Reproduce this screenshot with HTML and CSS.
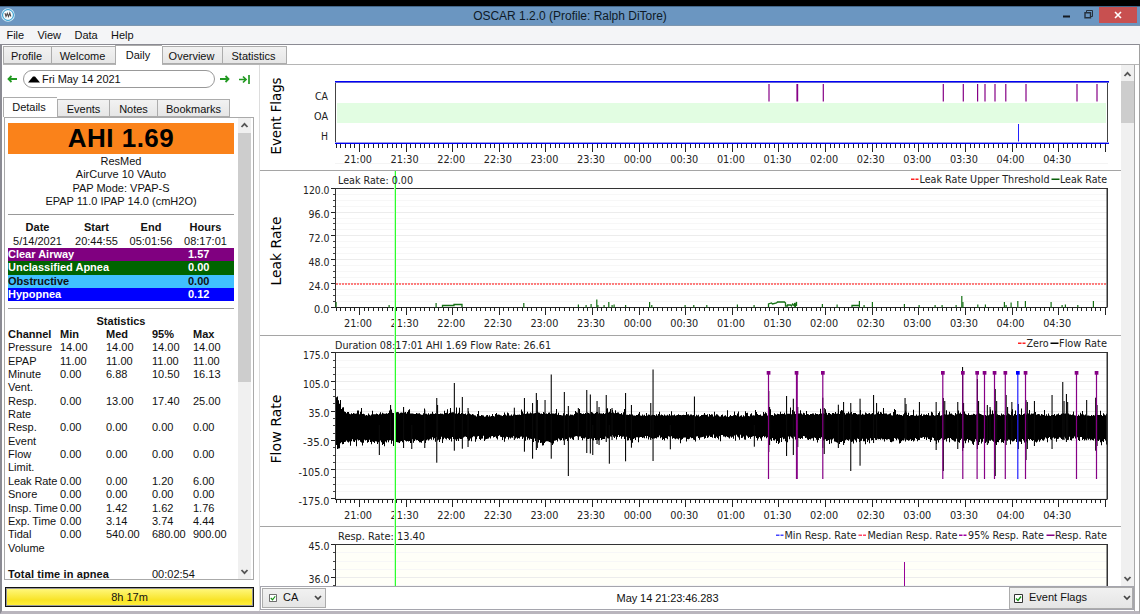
FILE: index.html
```html
<!DOCTYPE html>
<html lang="en">
<head>
<meta charset="utf-8">
<title>OSCAR 1.2.0</title>
<link rel="stylesheet" href="styles.css">
</head>
<body>
<header class="titlebar">
  <svg class="logo" width="14" height="14" viewBox="0 0 14 14"><circle cx="7" cy="7" r="6" fill="#f4fafc" stroke="#d5edf8" stroke-width="1.6"/><circle cx="7" cy="7" r="5.4" fill="none" stroke="#2499cf" stroke-width="1"/><path d="M4 5.200l1 3.300L6.300 5.500l1.200 3L8.800 5l1 3.500" fill="none" stroke="#514a4a" stroke-width="1.100"/></svg>
  <h1 class="title">OSCAR 1.2.0 (Profile: Ralph DiTore)</h1>
  <div class="winbtns">
    <svg width="32" height="16" viewBox="0 0 32 16"><path d="M1 9.500h7" stroke="#151b22" stroke-width="2"/><path d="M24.500 5v-1.500h6v6H29" fill="none" stroke="#26313d"/><path d="M23 5.700h5.500v5H23z" fill="none" stroke="#26313d" stroke-width="1.400"/></svg>
    <span class="close"><svg width="8" height="8" viewBox="0 0 8 8"><path d="M1 1l6 6M7 1L1 7" stroke="#fff" stroke-width="1.600"/></svg></span>
  </div>
</header>
<nav class="menu"><span>File</span><span>View</span><span>Data</span><span>Help</span></nav>
<div class="client">
  <div class="tabs main-tabs"><span class="t-profile">Profile</span><span class="t-welcome">Welcome</span><span class="t-daily on">Daily</span><span class="t-over">Overview</span><span class="t-stats">Statistics</span></div>
  <div class="panes">
    <aside class="side">
      <div class="datebar">
        <svg width="10" height="8" viewBox="0 0 10 8"><path d="M10 4H2M4.500 1l-3 3 3 3" fill="none" stroke="#229922" stroke-width="1.800"/></svg>
        <div class="date"><svg width="12" height="7" viewBox="0 0 12 7"><path d="M0 6.500L5 .5h2l5 6z"/></svg><span>Fri May 14 2021</span></div>
        <svg width="10" height="8" viewBox="0 0 10 8"><path d="M0 4h8M5.500 1l3 3-3 3" fill="none" stroke="#229922" stroke-width="1.800"/></svg>
        <svg class="last" width="11" height="9" viewBox="0 0 11 9"><path d="M0 4.500h7M4 1.500l3 3-3 3M10 0v9" fill="none" stroke="#229922" stroke-width="1.700"/></svg>
      </div>
      <div class="tabs side-tabs"><span class="t-details on">Details</span><span class="t-events">Events</span><span class="t-notes">Notes</span><span class="t-book">Bookmarks</span></div>
      <div class="details">
        <div class="report">
          <div class="ahi">AHI 1.69</div>
          <div class="machine">ResMed<br>AirCurve 10 VAuto<br>PAP Mode: VPAP-S<br>EPAP 11.0 IPAP 14.0 (cmH2O)</div>
          <hr class="rule">
          <div class="session"><b>Date</b><b>Start</b><b>End</b><b>Hours</b><span>5/14/2021</span><span>20:44:55</span><span>05:01:56</span><span>08:17:01</span></div>
          <div class="ev ca"><span>Clear Airway</span><span>1.57</span></div>
          <div class="ev ua"><span>Unclassified Apnea</span><span>0.00</span></div>
          <div class="ev oa"><span>Obstructive</span><span>0.00</span></div>
          <div class="ev hy"><span>Hypopnea</span><span>0.12</span></div>
          <hr class="rule second">
          <div class="stat-title">Statistics</div>
          <div class="stats">
            <b>Channel</b><b>Min</b><b>Med</b><b>95%</b><b>Max</b>
            <span>Pressure</span><span>14.00</span><span>14.00</span><span>14.00</span><span>14.00</span>
            <span>EPAP</span><span>11.00</span><span>11.00</span><span>11.00</span><span>11.00</span>
            <span>Minute<br>Vent.</span><span>0.00</span><span>6.88</span><span>10.50</span><span>16.13</span>
            <span>Resp.<br>Rate</span><span>0.00</span><span>13.00</span><span>17.40</span><span>25.00</span>
            <span>Resp.<br>Event</span><span>0.00</span><span>0.00</span><span>0.00</span><span>0.00</span>
            <span>Flow<br>Limit.</span><span>0.00</span><span>0.00</span><span>0.00</span><span>0.00</span>
            <span class="tight">Leak Rate</span><span>0.00</span><span>0.00</span><span>1.20</span><span>6.00</span>
            <span>Snore</span><span>0.00</span><span>0.00</span><span>0.00</span><span>0.00</span>
            <span class="tight">Insp. Time</span><span>0.00</span><span>1.42</span><span>1.62</span><span>1.76</span>
            <span class="tight">Exp. Time</span><span>0.00</span><span>3.14</span><span>3.74</span><span>4.44</span>
            <span>Tidal<br>Volume</span><span>0.00</span><span>540.00</span><span>680.00</span><span>900.00</span>
          </div>
          <div class="total"><b>Total time in apnea</b><span>00:02:54</span></div>
        </div>
        <div class="scroll side-scroll">
          <svg width="13" height="14" viewBox="0 0 13 14"><path d="M3.500 9l3-3.200L9.500 9" fill="none" stroke="#555" stroke-width="1.800"/></svg>
          <div class="thumb"></div>
          <svg class="down" width="13" height="14" viewBox="0 0 13 14"><path d="M3.500 5l3 3.200L9.500 5" fill="none" stroke="#555" stroke-width="1.800"/></svg>
        </div>
      </div>
      <div class="duration"><span>8h 17m</span></div>
    </aside>
    <main class="graphs">
      <div class="graph-row">
        <div class="graph-list">
          <svg id="flags" width="861" height="105" viewBox="260 65 861 105"></svg>
          <svg id="leak" width="861" height="165" viewBox="260 170 861 165"></svg>
          <svg id="flow" width="861" height="191" viewBox="260 335 861 191"></svg>
          <svg id="resp" width="861" height="60" viewBox="260 526 861 60"></svg>
        </div>
        <div class="scroll graph-scroll">
          <svg width="13" height="14" viewBox="0 0 13 14"><path d="M3.500 9l3-3.200L9.500 9" fill="none" stroke="#555" stroke-width="1.800"/></svg>
          <div class="thumb"></div>
          <svg class="down" width="13" height="14" viewBox="0 0 13 14"><path d="M3.500 5l3 3.200L9.500 5" fill="none" stroke="#555" stroke-width="1.800"/></svg>
        </div>
      </div>
      <div class="footer">
        <div class="combo combo-ca"><svg class="check" width="8" height="8" viewBox="0 0 9 9"><path d="M.5.5h8v8h-8z" fill="#fff" stroke="#555"/><path d="M2 4.500l2 2 3-4" fill="none" stroke="#159015" stroke-width="1.300"/></svg><span>CA</span><svg class="chev" width="8" height="6" viewBox="0 0 8 6"><path d="M1 1l3 3 3-3" fill="none" stroke="#444" stroke-width="1.700"/></svg></div>
        <div class="stamp">May 14 21:23:46.283</div>
        <div class="combo combo-flags"><svg class="check" width="9" height="9" viewBox="0 0 9 9"><path d="M.5.5h8v8h-8z" fill="#fff" stroke="#333"/><path d="M2 4.500l2 2 3-4" fill="none" stroke="#159015" stroke-width="1.300"/></svg><span>Event Flags</span><svg class="chev" width="8" height="6" viewBox="0 0 8 6"><path d="M1 1l3 3 3-3" fill="none" stroke="#444" stroke-width="1.700"/></svg></div>
      </div>
    </main>
  </div>
</div>
<script src="graphs.js"></script>
</body>
</html>
```
FILE: styles.css
```css
* { box-sizing: border-box; }
body { margin: 0; width: 1140px; height: 614px; overflow: hidden; display: flex; flex-direction: column; background: #fff; border-top: 6px solid #000; font: 11px/13.35px "Liberation Sans", Arial, sans-serif; color: #111; }
svg { display: block; flex: none; }
.titlebar { height: 20px; background: #6b96c1; border-top: 1px solid #44678a; border-bottom: 1px solid #7d97b0; display: flex; align-items: center; justify-content: space-between; }
.logo { margin: 0 0 2px 1px; }
.title { margin: 0 0 0 63px; flex: 1; text-align: center; font-weight: normal; font-size: 12px; line-height: 18px; color: #0e1a26; letter-spacing: -.01px; }
.winbtns { display: flex; align-self: flex-start; width: 76px; height: 16px; margin-right: 2px; }
.winbtns > svg { margin-right: 5px; }
.close { width: 38px; height: 16px; background: #c85050; display: flex; align-items: center; justify-content: center; }
.menu { height: 18px; background: #f4f5f7; display: flex; gap: 13.500px; padding: 3px 0 0 6.500px; font-size: 11px; letter-spacing: -.05px; color: #111; }
.client { height: 570px; border: solid #8b8b93; border-width: 1px 1px 3px 2px; border-bottom-color: #b9b5bd; border-right-color: #a0a0a0; padding-left: 1px; display: flex; flex-direction: column; }
.tabs { display: flex; align-items: flex-end; }
.tabs span { border: 1px solid #acacac; border-right-width: 0; background: linear-gradient(#f2f2f2, #e6e6e6); text-align: center; height: 18px; line-height: 18px; white-space: nowrap; }
.tabs span:last-child { border-right-width: 1px; }
.tabs .on { background: #fff; border-bottom: 0; }
.main-tabs { height: 20px; border-bottom: 1px solid #b5b5b5; }
.main-tabs span { height: 18px; padding-right: 2px; }
.main-tabs .on { height: 20px; margin-bottom: -1px; }
.t-profile { width: 48px; } .t-welcome { width: 64px; } .t-daily { width: 47px; } .t-over { width: 60px; } .t-stats { width: 65px; }
.panes { flex: 1; display: flex; min-height: 0; }
.side { width: 251px; margin-right: 6px; display: flex; flex-direction: column; }
.datebar { display: flex; align-items: center; height: 18px; margin-top: 5px; padding-left: 4px; }
.date { width: 192px; height: 18px; border: 1px solid #999; border-radius: 9px; margin: 0 5px 0 6px; padding: 1px 0 0 4px; display: flex; align-items: center; gap: 2px; }
.date span { letter-spacing: -.06px; }
.last { margin-left: 9px; }
.side-tabs { margin-top: 9px; height: 20px; }
.side-tabs .on { height: 20px; padding-right: 3px; line-height: 19px; }
.t-details { width: 54px; } .t-events { width: 52px; } .t-notes { width: 48px; } .t-book { width: 73px; }
.details { height: 463px; margin-left: 1px; border: 1px solid #aaa; display: flex; overflow: hidden; }
.report { width: 226px; margin: 5px 4px 0 3px; flex: none; height: 456px; }
.ahi { height: 31px; background: #fa821a; font: bold 26px/31px "Liberation Sans", Arial, sans-serif; letter-spacing: .5px; color: #000; text-align: center; }
.machine { text-align: center; padding-top: 1px; height: 60px; }
.rule { border: 0; height: 1px; background: #999; margin: 0; }
.session { display: grid; grid-template-columns: 59px 59px 50px 59px; padding-top: 6px; height: 33px; text-align: center; line-height: 13.300px; white-space: nowrap; color: #111; }
.ev { display: grid; grid-template-columns: 180px 1fr; height: 13.300px; font-weight: bold; color: #fff; }
.ca { background: #800080; } .ua { background: #006400; } .oa { background: #40c0ff; color: #111; } .hy { background: #00f; }
.second { margin-top: 6.500px; }
.stat-title { text-align: center; font-weight: bold; margin-top: 6px; height: 13.350px; }
.stats { display: grid; grid-template-columns: 52px 46px 46px 41px 41px; white-space: nowrap; }
.stats .tight { letter-spacing: -.1px; }
.total { display: grid; grid-template-columns: 144px 1fr; margin-top: 13px; white-space: nowrap; }
.total b { letter-spacing: .12px; }
.scroll { background: #f0f0f0; display: flex; flex-direction: column; width: 13px; }
.side-scroll .thumb { height: 249px; margin-top: 1px; background: #cdcdcd; }
.down { margin-top: auto; }
.duration { height: 20px; margin: 7px 0 0 2px; border: 2px solid #111; outline: 1px solid #999; outline-offset: -2px; background: linear-gradient(#fff77a, #f8e326 70%, #ffee3a); display: flex; justify-content: center; line-height: 16px; }
.graphs { width: 876px; border-left: 1px solid #ddd; border-right: 1px solid #aaa; display: flex; flex-direction: column; margin-left: -1px; }
.graph-row { display: flex; height: 521px; overflow: hidden; }
.graph-list { width: 861px; }
.graph-list text { font-family: "DejaVu Sans", sans-serif; font-size: 10px; fill: #222; }
.graph-list .name { font-size: 13.500px; fill: #000; }
.graph-scroll { width: 13px; padding-top: 2px; }
.graph-scroll .thumb { height: 42px; background: #cdcdcd; }
.footer { height: 24px; border: 1px solid #a5a5ad; display: flex; align-items: center; justify-content: space-between; }
.combo { height: 20px; border: 1px solid #acacac; background: linear-gradient(#f1f1f1, #e5e5e5); display: flex; align-items: center; }
.combo-ca { width: 64px; padding: 0 3px 0 6px; margin-left: 1px; }
.combo-flags { width: 124px; height: 22px; padding: 0 1px 0 4px; }
.combo span { margin-left: 6px; flex: 1; }
.stamp { flex: 1; text-align: center; padding: 1px 0 0; letter-spacing: -.08px; }
```
FILE: graphs.js
```js
const NS = 'http://www.w3.org/2000/svg';
const LEFT = 335, RIGHT = 1107.5;

function add(svg, tag, attrs, text) {
  const el = document.createElementNS(NS, tag);
  for (const k in attrs) el.setAttribute(k, attrs[k]);
  if (text) el.textContent = text;
  svg.appendChild(el);
}
function rect(svg, x, y, width, height, fill) { add(svg, 'rect', { x, y, width, height, fill }); }
function label(svg, text, x, y, width, anchor) {
  add(svg, 'text', { x, y: y + 3.6, 'text-anchor': anchor || 'start', textLength: width, lengthAdjust: 'spacingAndGlyphs' }, text);
}
function title(svg, text, y, width) {
  add(svg, 'text', { class: 'name', x: 0, y: 0, transform: `translate(281 ${y}) rotate(-90)`, 'text-anchor': 'middle', textLength: width, lengthAdjust: 'spacingAndGlyphs' }, text);
}

/* Time axis: a minor tick every three minutes, a label every thirty. */
function timeAxis(svg, y, labelY) {
  const step = 46.61;
  for (let i = -5; i <= 160; i++) {
    const x = Math.round(359 + i * step / 10);
    const major = i % 10 === 0;
    rect(svg, x, y, 1, major ? 8 : 4, '#222');
  }
  for (let i = 0; i < 16; i++) {
    const m = 21 * 60 + i * 30;
    const t = String(Math.floor(m / 60) % 24).padStart(2, '0') + ':' + String(m % 60).padStart(2, '0');
    label(svg, t, 358 + i * step, labelY, 28, 'middle');
  }
}
function valueAxis(svg, labels, top, step, minor, limit) {
  labels.forEach((t, i) => {
    const y = top + i * step;
    rect(svg, LEFT, Math.round(y), RIGHT - LEFT, 1, '#ececec');
    rect(svg, LEFT - 4, Math.round(y), 4, 1, '#222');
    label(svg, t, 329.5, y + 2.8, t.length > 5 ? 31 : t.length > 4 ? 26.5 : t.length > 3 ? 21 : 15.5, 'end');
    if (i < labels.length - 1 || limit) for (let k = 1; k < minor; k++) {
      const v = Math.round(y + k * step / minor);
      if (limit && v > limit) break;
      rect(svg, LEFT, v, RIGHT - LEFT, 1, '#f7f7f7');
      rect(svg, LEFT - 2, v, 2, 1, '#444');
    }
  });
}
function frame(svg, top, bottom) {
  rect(svg, LEFT, top, RIGHT - LEFT, 1, '#333');
  rect(svg, LEFT, top, 1, bottom - top, '#333');
  rect(svg, RIGHT - 1, top, 1.5, bottom - top, '#333');
  if (bottom < 580) rect(svg, LEFT, bottom, RIGHT - LEFT, 1, '#222');
}
function divider(svg, y) { rect(svg, 260, y, 861, 1, '#a5a5a5'); }
function dash(svg, x, y, color) { rect(svg, x, y - .5, 3.5, 1.5, color); rect(svg, x + 4.5, y - .5, 3, 1.5, color); }
function cursor(svg, y, h) { rect(svg, 394, y, 1, h, '#c8ffc8'); rect(svg, 395, y, 1, h, '#2bff2b'); }

const airway = [769, 797, 823.3, 943.3, 963.3, 977.6, 985, 995, 1005.8, 1026, 1077, 1097];

const flags = document.getElementById('flags');
title(flags, 'Event Flags', 116, 77);
label(flags, 'CA', 328, 96, 13, 'end');
label(flags, 'OA', 328, 116, 14, 'end');
label(flags, 'H', 328, 136, 7, 'end');
rect(flags, 337, 103, 769, 20, '#e2fde2');
rect(flags, 335, 82, 1, 61, '#444');
rect(flags, 1107, 82, 1, 61, '#444');
rect(flags, 335, 81, 774, 1, '#0000f5');
rect(flags, 335, 82, 774, 1, '#6060d8');
rect(flags, 335, 143, 774, 1, '#0000f5');
rect(flags, 335, 142, 774, 1, '#9a9ae8');
airway.forEach((x, i) => rect(flags, x - .6, 84, i === 1 ? 1.8 : 1.2, 17.5, '#860086'));
rect(flags, 1018, 124, 1, 17.5, '#2222ff');
timeAxis(flags, 144, 159);
rect(flags, 335, 163, 773, 1, '#f4f4f4');

const leak = document.getElementById('leak');
divider(leak, 170);
title(leak, 'Leak Rate', 251, 69);
valueAxis(leak, ['120.0', '96.0', '72.0', '48.0', '24.0', '0.0'], 187.7, 23.85, 4);
frame(leak, 188, 307);
add(leak, 'path', { d: 'M336 284H1107', stroke: '#ff5555', 'stroke-width': 1.4, 'stroke-dasharray': '2 1' });
[[336,302],[389,305],[436,303],[523.7,303],[578.3,304.5],[586,305],[591,304],[596.7,299.5],[597.8,305],[604,305],[608.7,302],[612,305],[614,304.5],[625.5,305],[649.5,302],[651.7,305],[685,305],[693.7,305],[706.7,305],[737.3,304.5],[754,305],[822.3,304],[837,304.5],[859.3,301],[864,305],[872.3,302],[904.3,304],[919,305],[935,305],[942,305],[956,305],[961.7,296],[962.8,302],[977.7,304.5],[985.3,304.5],[1004.3,302],[1006,305],[1011,302.5],[1017.7,301],[1025.3,301],[1051,302],[1062,305],[1065.3,304.5],[1077.7,305],[1093.3,301]]
  .forEach(([x, y]) => rect(leak, x - .5, y, 1.2, 307.5 - y, '#147014'));
add(leak, 'path', { d: 'M442.5 307.500v-2h11.500v-1h8v2.500M768.500 307v-3l3-1 1 1 4-1 1-1h7l1 1v3h2v-1h3l1 1 1-2 2 2v-3l1 3 1-4v4M852 307v-1.500h7', fill: 'none', stroke: '#147014', 'stroke-width': 1.3 });
timeAxis(leak, 307, 323);
cursor(leak, 171, 164);
label(leak, 'Leak Rate: 0.00', 338, 180, 75);
dash(leak, 911, 179, '#f22');
label(leak, 'Leak Rate Upper Threshold', 919.5, 179, 130);
rect(leak, 1051.5, 178.5, 8, 1.5, '#0a600a');
label(leak, 'Leak Rate', 1060, 179, 47);

const flow = document.getElementById('flow');
divider(flow, 335);
title(flow, 'Flow Rate', 429, 69);
valueAxis(flow, ['175.0', '105.0', '35.0', '-35.0', '-105.0', '-175.0'], 352.2, 29.25, 4);

let seed = 91;
function rnd() { seed = (seed * 16807) % 2147483647; return seed / 2147483647; }
/* Breathing envelope: x, upper edge, lower edge. */
const env = [[335,394,447],[338,401,446],[341,408,443],[346,413,441],[370,415,442],[395,412.5,441.5],[420,414,441],[436,414,439],[450,413,438.5],[470,414,439],[476,416,438],[515,415,437.5],[532,413,440],[548,413,443],[560,415,440],[580,414,437],[595,413,440],[615,413,437],[630,415,439],[660,415,438],[690,415,439],[705,416,437],[740,416,437],[765,414.5,438],[775,415,441],[790,414,438],[822,414,439],[840,413.5,442],[860,414,440],[876,413.5,439],[900,415,441],[920,415,439],[940,415,440],[965,414,441],[990,415,441],[1010,415,441],[1030,414,441],[1050,416,439],[1064,413.5,439],[1080,415.5,439],[1098,415,441],[1108,415,441]];
const upper = [], lower = [];
let e = 0;
for (let x = 335; x < 1107; x++) {
  while (e < env.length - 2 && env[e + 1][0] < x) e++;
  const f = (x - env[e][0]) / (env[e + 1][0] - env[e][0]);
  const hi = env[e][1] + f * (env[e + 1][1] - env[e][1]) - Math.pow(rnd(), 7) * 6 + rnd() * 1.8 - .8;
  const lo = env[e][2] + f * (env[e + 1][2] - env[e][2]) + Math.pow(rnd(), 4) * 4 - rnd() * 3.5 + 1;
  upper.push(`${x} ${hi.toFixed(1)}L${x + 1} ${hi.toFixed(1)}`);
  lower.unshift(`${x + 1} ${lo.toFixed(1)}L${x} ${lo.toFixed(1)}`);
}
add(flow, 'path', { d: 'M' + upper.join('L') + 'L' + lower.join('L') + 'Z', fill: '#000' });
[[379.3,425,455],[390.5,405,440],[403.5,407,448],[411.7,425,449],[424.7,409.7,448],[436.7,398,462.7],[437.5,405,440],[454.3,383,450.7],[462.3,397,448.7],[468,408,447],[514.3,407.7,440],[524.4,398,451.7],[532.5,403,458.7],[536.3,393,450],[537.3,400,448],[545,400,440],[551.2,374.5,458.7],[564.3,392,445],[568.3,406,476],[578.3,408,440],[586.7,390,453],[590.3,394.5,453.5],[592.7,425,455],[597,401,444],[599,407,445],[606.2,395,442],[609.3,425,463.7],[612,408,440],[625.5,393,461.3],[631.4,405,447.7],[650.7,403,440],[653,369.5,461],[670.3,425,449.3],[694.4,396.5,440],[754.3,425,446.7],[768.7,391,452],[769.5,407,445],[786.5,396,456],[793.3,398.7,455],[797.7,407,447],[822.7,397.7,448],[824.2,408,454],[838.3,404.7,448],[843.5,402,445],[850.7,403,471],[860,398.7,465.7],[873.5,395,443],[876.5,403,440],[905,398,440],[906,404,440],[919.4,402,440],[936.1,402,450],[943.3,398,471],[944.7,401,440],[957.7,402,449],[962.5,367,451],[963.5,403,448],[977.4,379,449],[978.5,401,445],[987.3,405,445],[990,407,440],[995.2,389,476],[996.6,401,440],[1006.1,395,445],[1007.5,407,440],[1011.8,402,440],[1018.3,404,449],[1026,400,460],[1027.3,402,449],[1034.4,401,446],[1052,395,449],[1062.7,382,440],[1064,401,440],[1066.4,394,442],[1067.6,402,440],[1086.6,400,440],[1095.6,397.7,450.7],[1097,405,446]]
  .forEach(([x, a, b]) => rect(flow, x - .5, a, 1.1, b - a, '#0a0a0a'));
frame(flow, 352, 499);
timeAxis(flow, 499, 515);
airway.forEach((x, i) => {
  rect(flow, x - 1.1, 373, i === 1 ? 1.9 : 1.2, 106, '#860086');
  rect(flow, x - 2.3, 371, 3.7, 3.7, '#860086');
});
rect(flow, 1017.2, 373, 1.2, 106, '#2222ff');
rect(flow, 1016, 371, 3.7, 3.7, '#0000ff');
cursor(flow, 335, 191);
label(flow, 'Duration 08:17:01 AHI 1.69 Flow Rate: 26.61', 335, 345, 216);
dash(flow, 1018, 343, '#f22');
label(flow, 'Zero', 1026.5, 343, 22);
rect(flow, 1050.5, 342.5, 8, 1.5, '#000');
label(flow, 'Flow Rate', 1059, 343, 48);

const resp = document.getElementById('resp');
divider(resp, 526);
rect(resp, 335, 544, 772, 42, '#fffff8');
valueAxis(resp, ['45.0', '36.0'], 544, 33, 4, 585);
frame(resp, 544, 586);
rect(resp, 904, 562, 1, 24, '#970097');
cursor(resp, 526, 60);
label(resp, 'Resp. Rate: 13.40', 338, 536, 87);
dash(resp, 776, 535, '#44f');
label(resp, 'Min Resp. Rate', 784.5, 535.5, 72);
dash(resp, 858.5, 535, '#f46');
label(resp, 'Median Resp. Rate', 867.5, 535.5, 90);
dash(resp, 959, 535, '#a000a0');
label(resp, '95% Resp. Rate', 968, 535.5, 76);
rect(resp, 1046.5, 534.5, 8, 1.5, '#860086');
label(resp, 'Resp. Rate', 1055, 535.5, 52);
```
